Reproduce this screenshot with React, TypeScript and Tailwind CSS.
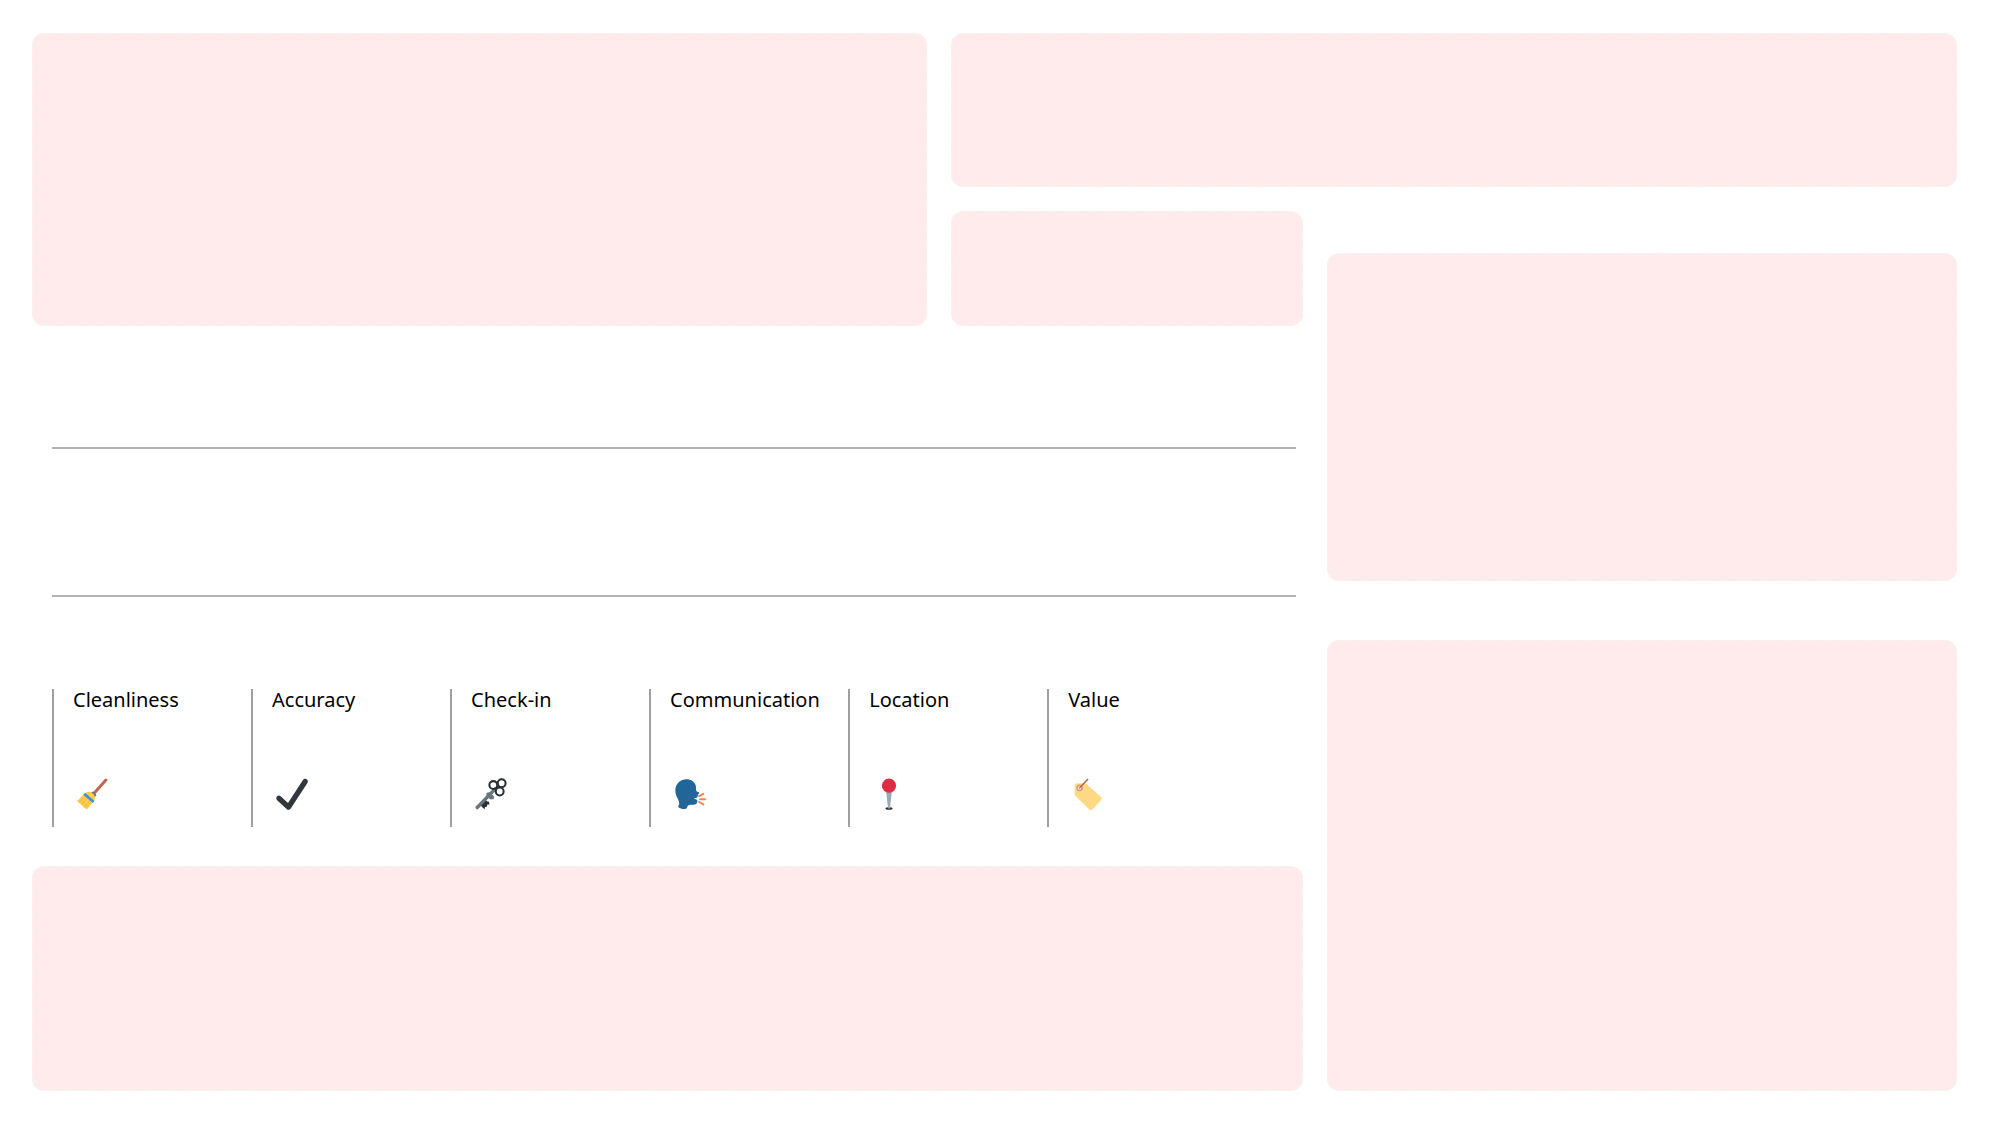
import type { ReactNode } from "react";

function Icon({ children }: { children: ReactNode }) {
  return (
    <svg viewBox="0 0 36 36" className="ml-1 size-8" aria-hidden="true">
      {children}
    </svg>
  );
}

const broom = (
  <Icon>
    <path d="M32.500 2.300 19 17.400" stroke="#C1694F" strokeWidth="3.400" strokeLinecap="round" />
    <path d="m17.800 15.200 4.200 3.800-2.300 3-5-4.600z" fill="#66757F" />
    <path d="M9.500 16.600c2.500-1.600 6-1.300 8.400.8 2.300 2.200 3 5 1.800 7.600L10.900 35.600 0 25.800z" fill="#FFCC4D" />
    <path d="m9.500 20-7 7.600M12 22.500l-7 7.500M15 25l-6.500 8" stroke="#FFAC33" strokeWidth="1" />
    <path d="m8.100 17.600 10.600 9.400" stroke="#3B94D9" strokeWidth="3" />
  </Icon>
);

const check = (
  <Icon>
    <path
      fill="#31373D"
      d="M34.459 1.375c-1.391-.902-3.248-.506-4.149.884L13.500 28.170l-8.198-7.580c-1.217-1.125-3.114-1.051-4.239.166-1.125 1.216-1.051 3.114.166 4.239l10.764 9.952s.309.266.452.359c.504.328 1.070.484 1.630.484.982 0 1.945-.482 2.520-1.368L35.343 5.524c.902-1.390.506-3.248-.884-4.149z"
    />
  </Icon>
);

const key = (
  <Icon>
    <path d="m7.500 27.800 4.800-4 .8 2.400 2.600.6.700 3-2.600-.1-.4 2.600-2.200.4-.4 2.500-2.600-2.400-1.700-2z" fill="#292F33" />
    <path d="M22.500 12.500 2.500 33.200" stroke="#66757F" strokeWidth="3.800" strokeLinecap="round" />
    <path d="m13 16.600 3.400-.6 5.200 4.800-.7 3-4 .2-4-3.800z" fill="#66757F" />
    <g fill="none" stroke="#292F33" strokeWidth="2.300">
      <circle cx="20.600" cy="7.900" r="4.400" />
      <circle cx="30" cy="5.900" r="4.400" />
      <circle cx="27.800" cy="15.200" r="4.400" />
    </g>
  </Icon>
);

const speaking = (
  <Icon>
    <path
      fill="#226699"
      transform="translate(1.500 0)"
      d="M12.500 1.400c5 0 9.700 3 10.600 7.500.4 2-.3 4.500.8 6 .9.700 2.600 1 3 1.700.4.900-1.200 1.300-1.500 2.200-.3 1.200-.2 2.500-1 3l-3.600 1.400c1 .9 3 .9 3.800 1.700.8.800-.3 2.100-.4 3.300-.3 2-3.700 2-6.200 2-1.700 0-3 .2-4 1.300-.8 1-.8 2.600-2 3-2.600.8-6.300.1-8.500-1.700-.8-.7.9-2.300.9-4 0-4.500-4.400-7.600-4.400-14.600C0 6.200 6 1.400 12.500 1.400z"
    />
    <path d="m28.300 20.300 4.700-2.500M29.300 23.800h5.600M28.300 27l4.700 2.700" stroke="#FF7F4D" strokeWidth="2.200" strokeLinecap="round" />
  </Icon>
);

const pin = (
  <Icon>
    <ellipse cx="18" cy="34.300" rx="4" ry="1.500" fill="#292F33" />
    <path d="M14.700 14h6.600l-2.100 19.500c-.2 1.300-2.200 1.300-2.400 0z" fill="#99AAB5" />
    <circle cx="18" cy="8.700" r="8" fill="#DD2E44" />
  </Icon>
);

const tag = (
  <Icon>
    <path d="M5.500 6h8.300c1.200 0 2.200.4 3 1.200l15.800 14c1.100 1 1.200 2.300.3 3.400L23 35.300c-1 1.100-2.300 1-3.400 0L4.200 20.500C3.400 19.700 3 18.800 3 17.600V8.500C3 7 4 6 5.500 6z" fill="#FFD983" />
    <circle cx="8.600" cy="11.200" r="2.800" fill="#fff" stroke="#D99E82" strokeWidth="2" />
    <path d="m8.800 11 8.700-9.300" stroke="#C1694F" strokeWidth="1.900" strokeLinecap="round" />
  </Icon>
);

const metrics = [
  { label: "Cleanliness", icon: broom },
  { label: "Accuracy", icon: check },
  { label: "Check-in", icon: key },
  { label: "Communication", icon: speaking },
  { label: "Location", icon: pin },
  { label: "Value", icon: tag },
];

function Panel({ className }: { className: string }) {
  return <section className={`rounded-xl border border-dashed border-gray-100 bg-[#ffebec] ${className}`} />;
}

export default function App() {
  return (
    <main className="grid min-h-screen grid-cols-[895fr_352fr_630fr] grid-rows-[154px_139px_1fr] gap-x-6 bg-white pt-[33px] pr-[43px] pb-[34px] pl-8 font-['Noto_Sans',sans-serif] text-black">
      <Panel className="row-span-2" />
      <Panel className="col-span-2" />
      <Panel className="mt-6" />

      <aside className="col-start-3 row-span-2 row-start-2 flex flex-col gap-[59px] pt-[66px]">
        <Panel className="h-[328px]" />
        <Panel className="min-h-[451px] flex-1" />
      </aside>

      <div className="col-span-2 col-start-1 row-start-3 flex flex-col pt-[121px]">
        <div className="mr-[7px] ml-5">
          <hr className="border-t-2 border-[#b3b3b3]" />
          <hr className="mt-[146px] border-t-2 border-[#b3b3b3]" />
          <ul className="mt-[92px] grid grid-cols-[repeat(6,4fr)_1fr]">
            {metrics.map(({ label, icon }) => (
              <li
                key={label}
                className="flex h-[138px] flex-col justify-between border-l-2 border-[#a0a0a0] pb-[17px] pl-[19px]"
              >
                <span className="text-xl leading-[22px]">{label}</span>
                {icon}
              </li>
            ))}
          </ul>
        </div>
        <Panel className="mt-[39px] min-h-[225px] flex-1" />
      </div>
    </main>
  );
}
